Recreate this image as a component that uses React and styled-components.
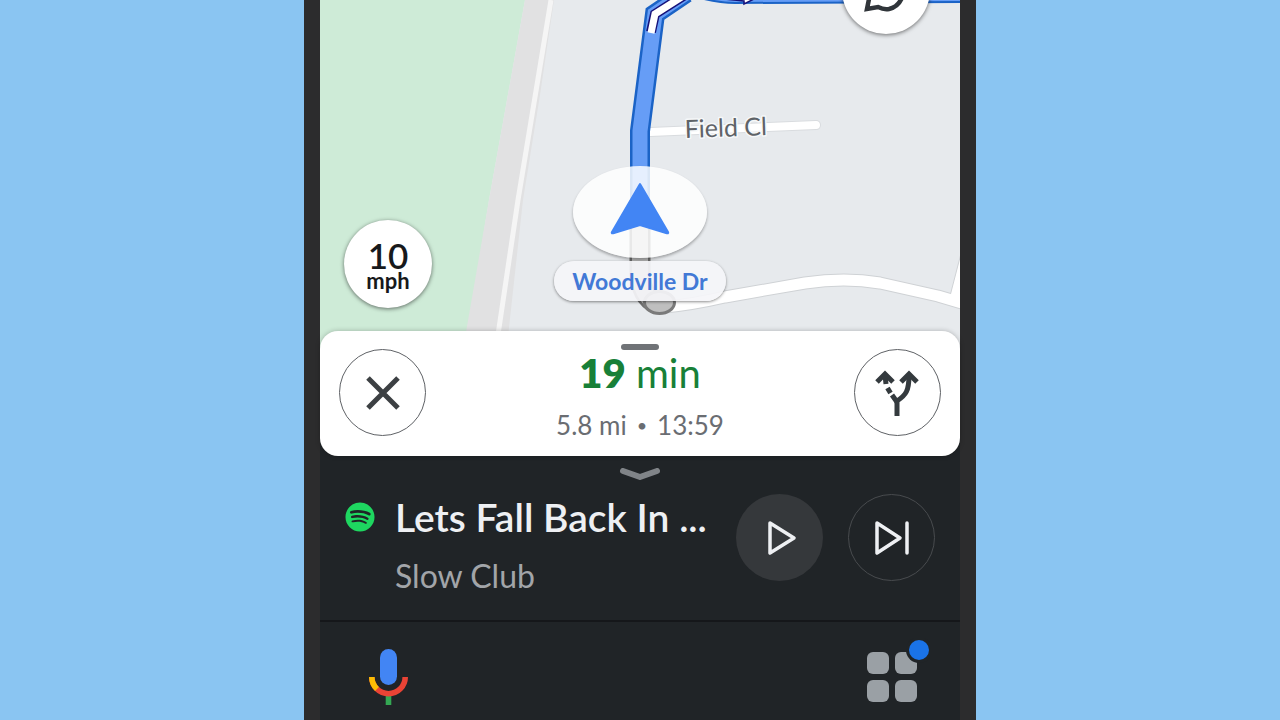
import React, { useState } from 'react';
import styled, { createGlobalStyle, css } from 'styled-components';
import { FaSpotify } from 'react-icons/fa';

const GlobalStyle = createGlobalStyle`
  * {
    box-sizing: border-box;
  }
  body {
    margin: 0;
    background: #8ac5f2;
    font-family: Lato, 'Open Sans', sans-serif;
  }
`;

const Device = styled.main`
  display: flex;
  flex-direction: column;
  width: 100%;
  max-width: 672px;
  min-height: 100vh;
  margin: 0 auto;
  border: solid #2c2c2d;
  border-width: 0 16px;
  background: #202427;
`;

const MapArea = styled.section`
  position: relative;
  flex: 1;
  min-height: 355px;
  overflow: hidden;
  background: #e7eaed;
`;

const MapDrawing = styled.svg`
  position: absolute;
  inset: 0;
  width: 100%;
  height: 100%;
`;

const RoadLabel = styled.text`
  font-size: 25px;
  fill: #5f6368;
  stroke: #f6f8f9;
  stroke-width: 3px;
  stroke-linejoin: round;
  paint-order: stroke;
`;

const Location = styled.div`
  position: absolute;
  left: 0;
  right: 0;
  bottom: 54px;
  display: flex;
  flex-direction: column;
  align-items: center;
  gap: 3px;
`;

const Puck = styled.div`
  display: flex;
  justify-content: center;
  width: 134px;
  height: 92px;
  padding-top: 16px;
  border-radius: 50%;
  background: rgba(255, 255, 255, 0.84);
  box-shadow: 0 2px 3px rgba(0, 0, 0, 0.3);
`;

const StreetPill = styled.div`
  height: 40px;
  padding: 0 18px;
  border-radius: 20px;
  background: rgba(245, 245, 248, 0.92);
  box-shadow: 0 1px 3px rgba(0, 0, 0, 0.45);
  color: #4279d6;
  font-size: 23px;
  font-weight: 700;
  line-height: 40px;
  white-space: nowrap;
`;

const floating = css`
  position: absolute;
  width: 88px;
  height: 88px;
  border: none;
  border-radius: 50%;
  background: white;
  box-shadow: 0 1px 4px rgba(0, 0, 0, 0.55);
`;

const Speed = styled.div`
  ${floating};
  left: 24px;
  bottom: 47px;
  display: flex;
  flex-direction: column;
  align-items: center;
  justify-content: center;
  padding-top: 4px;
  color: #17191b;
`;

const SpeedValue = styled.span`
  font-size: 35px;
  font-weight: 600;
  line-height: 30px;
`;

const SpeedUnit = styled.span`
  font-size: 22px;
  font-weight: 700;
  line-height: 22px;
`;

const ReportButton = styled.button`
  ${floating};
  top: -54px;
  right: 30px;
  padding: 0;
  cursor: pointer;
`;

const TripCard = styled.section`
  position: relative;
  display: flex;
  align-items: center;
  justify-content: space-between;
  margin-top: -24px;
  padding: 13px 19px 15px;
  border-radius: 18px;
  background: white;
  box-shadow: 0 0 5px rgba(0, 0, 0, 0.25);
`;

const TripInfo = styled.div`
  display: flex;
  flex-direction: column;
  align-items: center;
`;

const Handle = styled.span`
  width: 38px;
  height: 6px;
  border-radius: 3px;
  background: #707377;
`;

const Duration = styled.div`
  color: #188038;
  font-size: 40px;
  line-height: 46px;
  strong {
    font-weight: 800;
  }
`;

const Distance = styled.div`
  display: flex;
  align-items: center;
  gap: 10px;
  margin-top: 13px;
  color: #6a6d72;
  font-size: 26px;
  line-height: 32px;
`;

const Bullet = styled.span`
  font-size: 18px;
`;

const RoundButton = styled.button`
  display: flex;
  flex-shrink: 0;
  align-items: center;
  justify-content: center;
  width: 87px;
  height: 87px;
  padding: 0;
  border: ${(p) => (p.$line ? `1px solid ${p.$line}` : 'none')};
  border-radius: 50%;
  background: ${(p) => p.$fill || 'transparent'};
  cursor: pointer;
`;

const Media = styled.section`
  padding: 12px 25px 21px;
  border-bottom: 2px solid #15171a;
`;

const Collapse = styled.button`
  display: block;
  margin: 0 auto 12px;
  padding: 0;
  border: none;
  background: none;
  cursor: pointer;
  svg {
    display: block;
  }
`;

const Player = styled.div`
  display: flex;
  align-items: flex-start;
  gap: 25px;
`;

const Track = styled.div`
  display: grid;
  flex: 1;
  grid-template-columns: 30px 1fr;
  align-items: center;
  column-gap: 20px;
  row-gap: 13px;
  min-width: 0;
  color: #1ed760;
`;

const Title = styled.div`
  color: #eef0f3;
  font-size: 39px;
  font-weight: 600;
  line-height: 46px;
  white-space: nowrap;
`;

const Artist = styled.div`
  grid-column: 2;
  color: #a2a5a9;
  font-size: 32px;
  line-height: 46px;
`;

const Buttons = styled.div`
  display: flex;
  gap: 25px;
`;

const Dock = styled.nav`
  display: flex;
  align-items: flex-end;
  justify-content: space-between;
  padding: 16px 30px 15px 49px;
`;

const DockButton = styled.button`
  padding: 0;
  border: none;
  background: none;
  cursor: pointer;
  svg {
    display: block;
  }
`;

const RouteMap = () => (
  <MapDrawing viewBox="0 0 640 355" preserveAspectRatio="xMidYMax slice" aria-hidden="true">
    <path d="M0 0H205L169 200L144 355H0Z" fill="#ceebd7" />
    <path d="M205 0H234L220 95L203 200L186 355H142L169 200Z" fill="#e1e1e2" />
    <path d="M231 0L198 200L175 355" fill="none" stroke="#f5f5f5" strokeWidth="5" />
    {/* side roads */}
    <g fill="none" strokeLinecap="round" strokeLinejoin="round">
      <path d="M330 132L496 125" stroke="#d9dcdf" strokeWidth="10" />
      <path d="M330 132L496 125" stroke="#fff" strokeWidth="8" />
      <path
        d="M345 307Q370 305 405 297L485 283Q525 277 560 283L618 296L645 304"
        stroke="#cfd2d5"
        strokeWidth="13"
      />
      <path d="M630 296L645 238V300Z" fill="#fff" stroke="#cfd2d5" strokeWidth="1" />
      <path
        d="M345 307Q370 305 405 297L485 283Q525 277 560 283L618 296L645 304"
        stroke="#fff"
        strokeWidth="11"
      />
    </g>
    <RoadLabel x="365" y="138" transform="rotate(-2 365 138)">
      Field Cl
    </RoadLabel>
    {/* travelled part */}
    <g fill="none">
      <path d="M320 200V270Q320 296 337 304" stroke="#6f6f6f" strokeWidth="21" />
      <path d="M320 200V270Q320 296 337 304" stroke="#bdbdbd" strokeWidth="16" />
      <ellipse cx="339.500" cy="302.500" rx="15" ry="11" fill="#bfbfbf" stroke="#7a7a7a" strokeWidth="3" />
    </g>
    {/* route ahead */}
    <g fill="none" strokeLinejoin="miter">
      <path d="M320 222V131L335 14L366 -7" stroke="#1b63c6" strokeWidth="20" />
      <path d="M320 222V131L335 14L366 -7" stroke="#669df6" strokeWidth="15" />
      <path d="M385 -8Q402 -4 415 -4L645 -5" stroke="#1b63c6" strokeWidth="16" />
      <path d="M385 -8Q402 -4 415 -4L645 -5" stroke="#669df6" strokeWidth="12" />
      <path d="M331 32L335 14L368 -7" stroke="#16127a" strokeWidth="10" />
      <path d="M331 33L335 14L368 -7" stroke="#fff" strokeWidth="7" />
      <path d="M404 -1L424 1L424 4L434 -1Z" fill="#fff" stroke="#16127a" strokeWidth="1.500" />
    </g>
  </MapDrawing>
);

const App = () => {
  const [playing, setPlaying] = useState(false);

  return (
    <>
      <GlobalStyle />
      <Device>
        <MapArea>
          <RouteMap />
          <Location>
            <Puck>
              <svg width="62" height="54" viewBox="0 0 62 54">
                <path
                  d="M31 2L59 50Q60 52 57 51L31 43L5 51Q2 52 3 50Z"
                  fill="#4285f4"
                  stroke="#4285f4"
                  strokeWidth="2"
                  strokeLinejoin="round"
                />
              </svg>
            </Puck>
            <StreetPill>Woodville Dr</StreetPill>
          </Location>
          <Speed>
            <SpeedValue>10</SpeedValue>
            <SpeedUnit>mph</SpeedUnit>
          </Speed>
          <ReportButton aria-label="Report">
            <svg width="88" height="88" viewBox="0 0 88 88">
              <path
                d="M28 48Q24 41 27 34Q32 24 44 24Q61 25 62 43Q60 60 47 63Q42 64 36 61L25 63Z"
                fill="none"
                stroke="#30353a"
                strokeWidth="4.500"
              />
            </svg>
          </ReportButton>
        </MapArea>

        <TripCard>
          <RoundButton $line="#5f6266" aria-label="Close">
            <svg width="34" height="34" viewBox="0 0 34 34">
              <path d="M2 2L32 32M32 2L2 32" stroke="#3c4043" strokeWidth="5" />
            </svg>
          </RoundButton>
          <TripInfo>
            <Handle />
            <Duration>
              <strong>19</strong> min
            </Duration>
            <Distance>
              <span>5.8 mi</span>
              <Bullet>•</Bullet>
              <span>13:59</span>
            </Distance>
          </TripInfo>
          <RoundButton $line="#5f6266" aria-label="Alternative routes">
            <svg width="44" height="46" viewBox="0 0 44 46" fill="none" stroke="#343a3e" strokeWidth="5">
              <path d="M2 12L10 4L18 12M26 12L34 4L42 12" />
              <path d="M22 46V31C31 25 34 21 34 5" />
              <path d="M10 5L11 14M12.500 18L15.500 23M17 25L22 32" />
            </svg>
          </RoundButton>
        </TripCard>

        <Media>
          <Collapse aria-label="Collapse player">
            <svg width="42" height="14" viewBox="0 0 42 14">
              <path
                d="M4 3L21 9L38 3"
                fill="none"
                stroke="#808488"
                strokeWidth="6"
                strokeLinecap="round"
                strokeLinejoin="round"
              />
            </svg>
          </Collapse>
          <Player>
            <Track>
              <FaSpotify size={30} />
              <Title>Lets Fall Back In ...</Title>
              <Artist>Slow Club</Artist>
            </Track>
            <Buttons>
              <RoundButton
                $fill="#35383b"
                aria-label="Play"
                aria-pressed={playing}
                onClick={() => setPlaying(!playing)}
              >
                <svg width="36" height="36" viewBox="0 0 36 36">
                  <path
                    d="M8 3L32 18L8 33Z"
                    fill="none"
                    stroke="#eef0f3"
                    strokeWidth="3.500"
                    strokeLinejoin="round"
                  />
                </svg>
              </RoundButton>
              <RoundButton $line="#484b4e" aria-label="Next track">
                <svg width="36" height="36" viewBox="0 0 36 36">
                  <path
                    d="M3 3L26 18L3 33ZM33 3V33"
                    fill="none"
                    stroke="#eef0f3"
                    strokeWidth="3.500"
                    strokeLinejoin="round"
                    strokeLinecap="round"
                  />
                </svg>
              </RoundButton>
            </Buttons>
          </Player>
        </Media>

        <Dock>
          <DockButton aria-label="Voice search">
            <svg width="40" height="56" viewBox="0 0 40 56" fill="none">
              <rect x="11" width="17" height="36" rx="8.500" fill="#4285f4" />
              <path d="M16.700 46H22.300V56H16.700Z" fill="#34a853" />
              <path d="M2.800 28A16.700 16.700 0 0 0 36.200 28" stroke="#ea4335" strokeWidth="5.600" />
              <path d="M2.800 28A16.700 16.700 0 0 0 8 40" stroke="#fbbc04" strokeWidth="5.600" />
            </svg>
          </DockButton>
          <DockButton aria-label="Apps">
            <svg width="64" height="67" viewBox="0 0 64 67" fill="#9aa0a5">
              <rect x="1" y="14" width="22" height="22" rx="6" />
              <rect x="29" y="14" width="22" height="22" rx="6" />
              <rect x="1" y="42" width="22" height="22" rx="6" />
              <rect x="29" y="42" width="22" height="22" rx="6" />
              <circle cx="53" cy="12" r="13" fill="#202427" />
              <circle cx="53" cy="12" r="10" fill="#1a73e8" />
            </svg>
          </DockButton>
        </Dock>
      </Device>
    </>
  );
};

export default App;
